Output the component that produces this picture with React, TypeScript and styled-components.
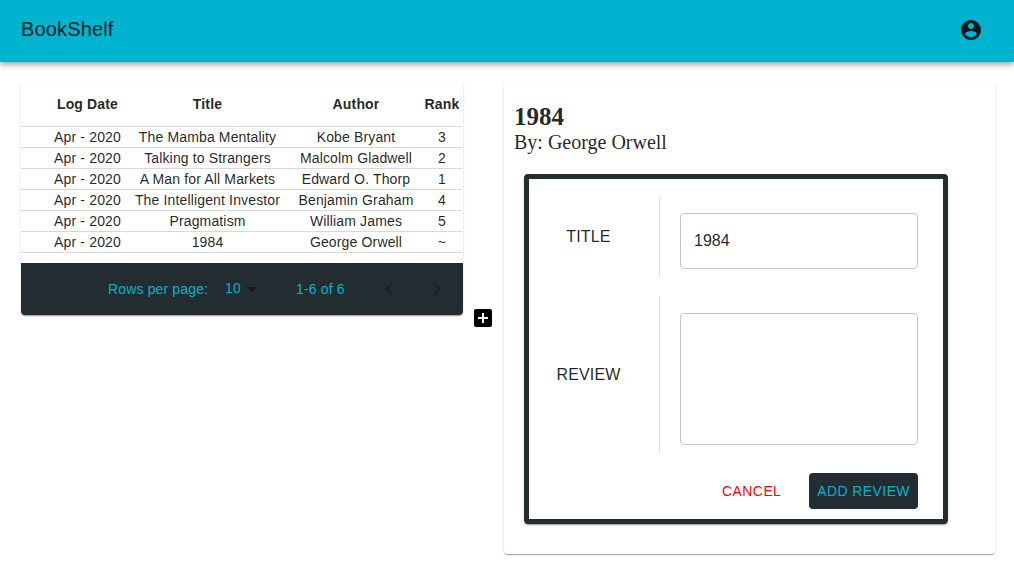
import React from "react";
import styled, { createGlobalStyle } from "styled-components";

const cyan = "#00b4d0";
const dark = "#232c30";
const ink = "rgba(0, 0, 0, 0.87)";
const cardShadow =
  "0 2px 1px -1px rgba(0,0,0,0.2), 0 1px 1px 0 rgba(0,0,0,0.14), 0 1px 3px 0 rgba(0,0,0,0.12)";

const GlobalStyle = createGlobalStyle`
  *, *::before, *::after { box-sizing: border-box; }
  body {
    margin: 0;
    background: #fff;
    color: ${ink};
    font-family: "Liberation Sans", Arial, sans-serif;
    overflow: hidden;
  }
`;

const AppBar = styled.header`
  display: flex;
  align-items: center;
  justify-content: space-between;
  height: 62px;
  padding: 0 31px 2px 21px;
  background: ${cyan};
  box-shadow: 0 2px 4px -1px rgba(0, 0, 0, 0.2), 0 4px 5px 0 rgba(0, 0, 0, 0.14),
    0 1px 10px 0 rgba(0, 0, 0, 0.12);
`;

const Brand = styled.div`
  font-size: 20px;
  line-height: 32px;
  letter-spacing: 0.15px;
  padding-bottom: 2px;
`;

const Icon = styled.svg`
  display: block;
  flex: none;
  width: 24px;
  height: 24px;
  fill: currentColor;
`;

const Main = styled.main`
  display: flex;
  align-items: flex-start;
  padding: 20px 19px 8px 21px;
`;

const Card = styled.section`
  background: #fff;
  border-radius: 4px;
  box-shadow: ${cardShadow};
`;

const TableCard = styled(Card)`
  width: 442px;
  overflow: hidden;
`;

const Table = styled.table`
  width: 441px;
  table-layout: fixed;
  border-collapse: separate;
  border-spacing: 0;
  margin-bottom: 10px;
  font-size: 14px;
  letter-spacing: 0.15px;
  text-align: center;
`;

const Column = styled.col<{ $width: number }>`
  width: ${(p) => p.$width}px;
`;

const Cell = styled.td`
  height: 21px;
  padding: 0;
  line-height: 20px;
  white-space: nowrap;
  border-bottom: 1px solid #d8d8d8;
  &:first-child { padding-left: 27px; }
  &:last-child { padding-right: 2px; }
`;

const HeadCell = styled(Cell)`
  height: 45px;
  font-weight: 700;
`;

const Pagination = styled.footer`
  display: flex;
  align-items: center;
  height: 52px;
  padding-left: 87px;
  background: ${dark};
  color: ${cyan};
  font-size: 14px;
  letter-spacing: 0.15px;
  white-space: nowrap;
`;

const RowsLabel = styled.span`
  width: 117px;
`;

const PageSize = styled.button`
  display: flex;
  align-items: center;
  width: 71px;
  padding: 0;
  border: 0;
  background: none;
  color: inherit;
  font: inherit;
  letter-spacing: inherit;
  svg { color: #12171a; margin: 0 0 1px -1px; }
  span { padding-bottom: 2px; }
`;

const RangeLabel = styled.span`
  width: 81px;
`;

const PageArrows = styled.div`
  display: flex;
  gap: 24px;
  padding-bottom: 1px;
  color: #1a2024;
`;

const AddSlot = styled.div`
  margin: 224px 9px 0 8px;
  color: #000;
`;

const DetailCard = styled(Card)`
  width: 491px;
  height: 472px;
  padding: 20px 10px;
`;

const BookTitle = styled.h2`
  margin: 0;
  font: 700 25px/29px "Liberation Serif", "Times New Roman", serif;
`;

const BookAuthor = styled.p`
  margin: 0;
  font: 400 20px/23px "Liberation Serif", "Times New Roman", serif;
`;

const Form = styled.div`
  width: 424px;
  height: 350px;
  margin: 20px 0 0 10px;
  padding: 18px 25px 0 0;
  border: 5px solid ${dark};
  border-radius: 4px;
  box-shadow: ${cardShadow};
`;

const Field = styled.div<{ $height: number }>`
  display: flex;
  height: ${(p) => p.$height}px;
  margin-bottom: 20px;
`;

const FieldLabel = styled.label`
  display: flex;
  align-items: center;
  justify-content: center;
  width: 131px;
  padding-right: 11px;
  border-right: 1px solid #e0e0e0;
  font-size: 16px;
  letter-spacing: 0.15px;
`;

const inputBox = `
  flex: 1;
  min-width: 0;
  margin: 16px 0 0 20px;
  padding: 0 13px;
  border: 1px solid #c4c4c4;
  border-radius: 4px;
  background: #fff;
  color: ${ink};
  font: 16px "Liberation Sans", Arial, sans-serif;
  outline: none;
`;

const TextInput = styled.input`
  ${inputBox}
  height: 56px;
`;

const TextArea = styled.textarea`
  ${inputBox}
  height: 132px;
  resize: none;
`;

const Actions = styled.div`
  display: flex;
  justify-content: flex-end;
  gap: 20px;
`;

const Button = styled.button<{ $filled?: boolean }>`
  height: 36px;
  padding: 0 8px;
  border: 0;
  border-radius: 4px;
  background: ${(p) => (p.$filled ? dark : "transparent")};
  color: ${(p) => (p.$filled ? cyan : "#f00")};
  font: 14px "Liberation Sans", Arial, sans-serif;
  letter-spacing: 0.4px;
  white-space: nowrap;
`;

const books = [
  ["Apr - 2020", "The Mamba Mentality", "Kobe Bryant", "3"],
  ["Apr - 2020", "Talking to Strangers", "Malcolm Gladwell", "2"],
  ["Apr - 2020", "A Man for All Markets", "Edward O. Thorp", "1"],
  ["Apr - 2020", "The Intelligent Investor", "Benjamin Graham", "4"],
  ["Apr - 2020", "Pragmatism", "William James", "5"],
  ["Apr - 2020", "1984", "George Orwell", "~"],
];

export default function App() {
  return (
    <>
      <GlobalStyle />
      <AppBar>
        <Brand>BookShelf</Brand>
        <Icon viewBox="0 0 24 24">
          <path d="M12 2C6.48 2 2 6.48 2 12s4.48 10 10 10 10-4.48 10-10S17.52 2 12 2zm0 3c1.66 0 3 1.34 3 3s-1.34 3-3 3-3-1.34-3-3 1.34-3 3-3zm0 14.2c-2.5 0-4.71-1.28-6-3.22.03-1.99 4-3.08 6-3.08 1.99 0 5.97 1.09 6 3.08-1.29 1.94-3.5 3.22-6 3.22z" />
        </Icon>
      </AppBar>
      <Main>
        <TableCard>
          <Table>
            <colgroup>
              <Column $width={106} />
              <Column $width={161} />
              <Column $width={136} />
              <Column $width={38} />
            </colgroup>
            <thead>
              <tr>
                {["Log Date", "Title", "Author", "Rank"].map((name) => (
                  <HeadCell as="th" key={name}>{name}</HeadCell>
                ))}
              </tr>
            </thead>
            <tbody>
              {books.map((book) => (
                <tr key={book[1]}>
                  {book.map((value) => (
                    <Cell key={value}>{value}</Cell>
                  ))}
                </tr>
              ))}
            </tbody>
          </Table>
          <Pagination>
            <RowsLabel>Rows per page:</RowsLabel>
            <PageSize>
              <span>10</span>
              <Icon viewBox="0 0 24 24"><path d="M7 10l5 5 5-5z" /></Icon>
            </PageSize>
            <RangeLabel>1-6 of 6</RangeLabel>
            <PageArrows>
              <Icon viewBox="0 0 24 24">
                <path d="M15.41 7.41L14 6l-6 6 6 6 1.41-1.41L10.83 12z" />
              </Icon>
              <Icon viewBox="0 0 24 24">
                <path d="M10 6L8.59 7.41 13.17 12l-4.58 4.59L10 18l6-6z" />
              </Icon>
            </PageArrows>
          </Pagination>
        </TableCard>
        <AddSlot>
          <Icon viewBox="0 0 24 24">
            <path d="M19 3H5c-1.11 0-2 .9-2 2v14c0 1.1.89 2 2 2h14c1.1 0 2-.9 2-2V5c0-1.1-.9-2-2-2zm-2 10h-4v4h-2v-4H7v-2h4V7h2v4h4v2z" />
          </Icon>
        </AddSlot>
        <DetailCard>
          <BookTitle>1984</BookTitle>
          <BookAuthor>By: George Orwell</BookAuthor>
          <Form>
            <Field $height={80}>
              <FieldLabel htmlFor="title">TITLE</FieldLabel>
              <TextInput id="title" defaultValue="1984" />
            </Field>
            <Field $height={156}>
              <FieldLabel htmlFor="review">REVIEW</FieldLabel>
              <TextArea id="review" />
            </Field>
            <Actions>
              <Button>CANCEL</Button>
              <Button $filled>ADD REVIEW</Button>
            </Actions>
          </Form>
        </DetailCard>
      </Main>
    </>
  );
}
